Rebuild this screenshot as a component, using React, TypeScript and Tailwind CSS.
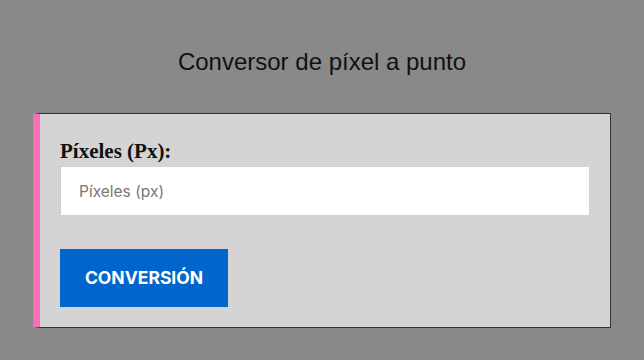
export default function App() {
  return (
    <div className="w-[644px] h-[360px] bg-[#898989] overflow-hidden">
      <h1 className="pt-[47px] h-[113px] text-center text-[24px] leading-[30px] text-[#111] font-['Liberation_Sans',Arial,sans-serif] font-normal">
        Conversor de píxel a punto
      </h1>
      <div className="ml-[33px] w-[578px] h-[215px] bg-[#d4d4d4] border border-[#333] border-l-[7px] border-l-[#f86fb6] pl-[20px] pr-[20px] pt-[23px]">
        <label className="block text-[21px] leading-[28px] font-bold text-[#111] font-['Liberation_Serif','Times_New_Roman',serif]">
          Píxeles (Px):
        </label>
        <input
          type="text"
          placeholder="Píxeles (px)"
          className="mt-[1px] block w-full h-[50px] bg-white border border-[#d0d0d0] px-[18px] text-[15.5px] text-[#333] placeholder:text-[#777] font-['Inter','Noto_Sans',sans-serif] outline-none"
        />
        <button className="mt-[33px] h-[58px] w-[168px] bg-[#0066cc] text-white text-[17.5px] font-bold font-['Inter','Noto_Sans',sans-serif]">
          CONVERSIÓN
        </button>
      </div>
    </div>
  );
}
